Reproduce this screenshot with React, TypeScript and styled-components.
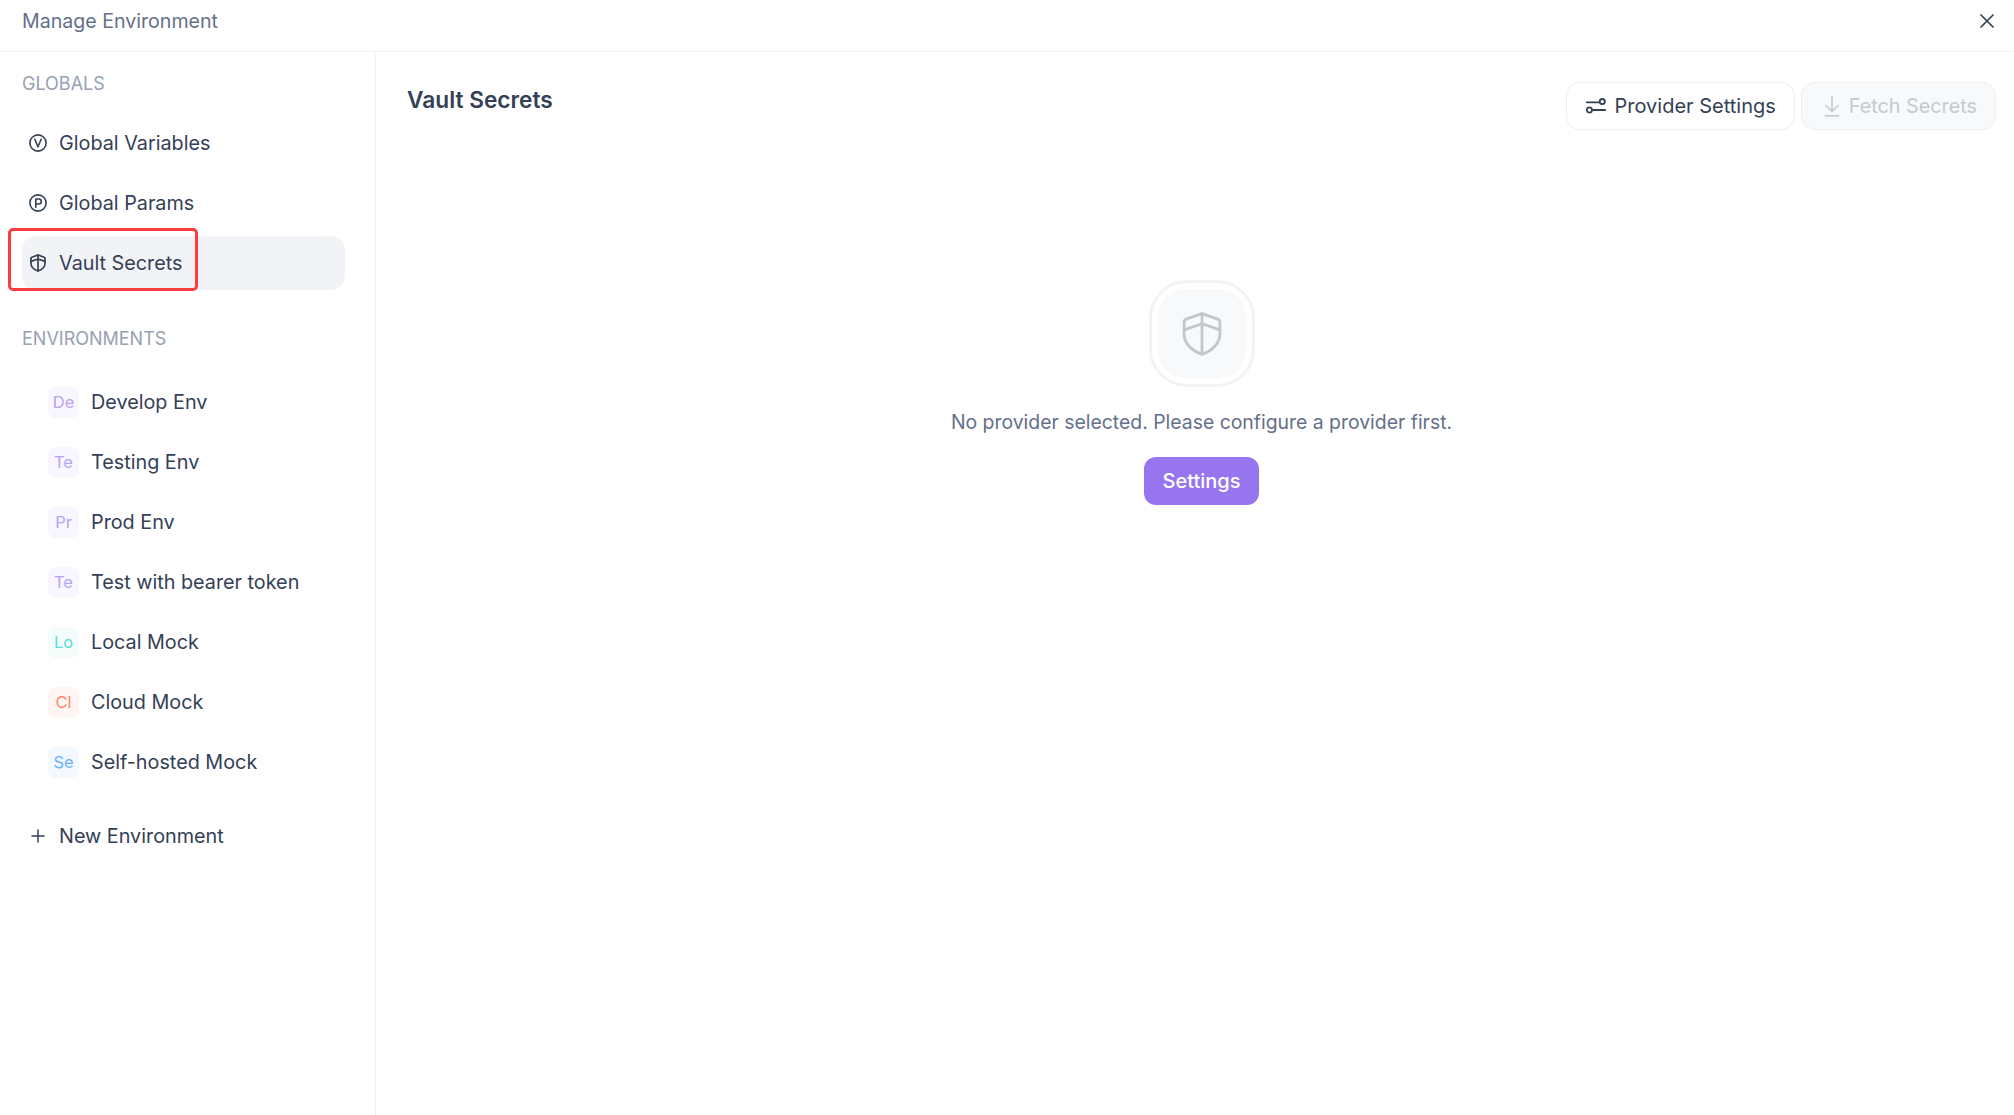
import * as React from 'react'
import styled, { createGlobalStyle } from 'styled-components'

const GlobalStyle = createGlobalStyle`
  html, body {
    margin: 0;
    padding: 0;
    background: #fff;
    font-family: Inter, "Liberation Sans", sans-serif;
  }
  * {
    box-sizing: border-box;
  }
`

const Page = styled.div`
  width: 2014px;
  height: 1115px;
  display: flex;
  flex-direction: column;
  overflow: hidden;
  background: #fff;
`

const Header = styled.header`
  height: 52px;
  flex: none;
  display: flex;
  align-items: center;
  justify-content: space-between;
  padding: 0 18px 10px 22px;
  border-bottom: 1px solid #f2f3f6;
`

const HeaderTitle = styled.div`
  font-size: 19.6px;
  line-height: 24px;
  color: #64708a;
`

const CloseButton = styled.button`
  display: flex;
  padding: 0;
  border: 0;
  background: none;
  color: #344056;
`

const Body = styled.div`
  flex: 1;
  display: flex;
  min-height: 0;
`

const Sidebar = styled.aside`
  width: 376px;
  flex: none;
  padding: 20px 30px 0 22px;
  border-right: 1px solid #f2f3f6;
`

const SectionLabel = styled.div<{ $top?: number; $bottom: number }>`
  font-size: 18px;
  line-height: 24px;
  color: #98a1b1;
  margin-top: ${(p) => p.$top || 0}px;
  margin-bottom: ${(p) => p.$bottom}px;
`

const NavList = styled.div`
  display: flex;
  flex-direction: column;
  gap: 6px;
`

const NavRow = styled.div<{ $active?: boolean; $indent?: boolean; $top?: number }>`
  height: 54px;
  display: flex;
  align-items: center;
  gap: 12px;
  padding-left: ${(p) => (p.$indent ? 26 : 7)}px;
  margin-top: ${(p) => p.$top || 0}px;
  border-radius: 14px;
  font-size: 19.8px;
  color: #344056;
  background: ${(p) => (p.$active ? '#f2f3f7' : 'transparent')};
`

const Badge = styled.span<{ $fg: string; $bg: string }>`
  width: 31px;
  height: 31px;
  flex: none;
  display: flex;
  align-items: center;
  justify-content: center;
  border-radius: 8px;
  font-size: 16.5px;
  color: ${(p) => p.$fg};
  background: ${(p) => p.$bg};
`

const Callout = styled.div`
  position: absolute;
  left: 8px;
  top: 228px;
  width: 190px;
  height: 63px;
  border: 3.5px solid #fb3c40;
  border-radius: 5px;
`

const Main = styled.main`
  flex: 1;
  min-width: 0;
  padding: 30px 18px 0 31px;
`

const MainHead = styled.div`
  display: flex;
  align-items: flex-start;
  justify-content: space-between;
`

const MainTitle = styled.h1`
  margin: 0;
  font-size: 22.7px;
  line-height: 36px;
  font-weight: 600;
  color: #344056;
`

const Actions = styled.div`
  display: flex;
  gap: 6px;
`

const ActionButton = styled.button<{ $disabled?: boolean }>`
  height: 48px;
  display: flex;
  align-items: center;
  gap: ${(p) => (p.$disabled ? 8 : 9)}px;
  padding: 0 18px 0 19px;
  border-radius: 14px;
  border: 1px solid ${(p) => (p.$disabled ? '#eceef2' : '#eceef1')};
  background: ${(p) => (p.$disabled ? '#f8f9fb' : '#fff')};
  color: ${(p) => (p.$disabled ? '#c5c9d0' : '#344056')};
  font-family: inherit;
  font-size: ${(p) => (p.$disabled ? 19.8 : 20)}px;
`

const Empty = styled.div`
  display: flex;
  flex-direction: column;
  align-items: center;
  margin-top: 150px;
`

const IconFrame = styled.div`
  width: 106px;
  height: 107px;
  padding: 6px;
  border: 3px solid #f2f3f7;
  border-radius: 38px;
`

const IconInner = styled.div`
  width: 100%;
  height: 100%;
  display: flex;
  align-items: center;
  justify-content: center;
  border-radius: 28px;
  background: #f8f9fb;
  color: #c3c6cc;
`

const EmptyText = styled.p`
  margin: 22px 0 0;
  font-size: 19.4px;
  line-height: 26px;
  color: #64708a;
`

const PrimaryButton = styled.button`
  width: 115px;
  height: 48px;
  margin-top: 22px;
  border: 0;
  border-radius: 12px;
  background: #9775ee;
  color: #fff;
  font-family: inherit;
  font-size: 20px;
  font-weight: 500;
`

const LetterCircleIcon = ({ letter }: { letter: 'v' | 'p' }) => (
  <svg width="18" height="18" viewBox="0 0 18 18" fill="none" stroke="currentColor" strokeWidth="1.6" strokeLinecap="round" strokeLinejoin="round">
    <circle cx="9" cy="9" r="8.1" />
    {letter === 'v' ? (
      <path d="M5.8 5.2 9 12.8l3.200-7.600" />
    ) : (
      <path d="M6.800 13.200V5h3a2.500 2.500 0 0 1 0 5H6.800" />
    )}
  </svg>
)

const ShieldIcon = ({ size, strokeWidth }: { size: number; strokeWidth: number }) => (
  <svg width={size} height={size} viewBox="0 0 18 18" fill="none" stroke="currentColor" strokeWidth={strokeWidth} strokeLinecap="round" strokeLinejoin="round">
    <path d="M9 1 15.2 3.200c.5.2.8.6.8 1.200v4.800c0 3.600-3.400 6.600-7 7.800-3.600-1.200-7-4.200-7-7.800V4.400c0-.6.3-1 .8-1.200L9 1Z" />
    <path d="M9 1v16M2 7.400 9 5l7 2.400" />
  </svg>
)

const PlusIcon = () => (
  <svg width="18" height="18" viewBox="0 0 18 18" fill="none" stroke="currentColor" strokeWidth="1.5" strokeLinecap="round">
    <path d="M9 3v12M3 9h12" />
  </svg>
)

const CloseIcon = () => (
  <svg width="18" height="18" viewBox="0 0 18 18" fill="none" stroke="currentColor" strokeWidth="1.7" strokeLinecap="round">
    <path d="M3 3l12 12M15 3 3 15" />
  </svg>
)

const SliderIcon = () => (
  <svg width="20" height="20" viewBox="0 0 20 20" fill="none" stroke="currentColor" strokeWidth="1.8" strokeLinecap="round">
    <circle cx="16.300" cy="5.600" r="2.600" />
    <circle cx="3.400" cy="14" r="2.600" />
    <path d="M.8 6.300h12.200M7.400 14h11.800" />
  </svg>
)

const DownloadIcon = () => (
  <svg width="20" height="21" viewBox="0 0 20 21" fill="none" stroke="currentColor" strokeWidth="1.7" strokeLinecap="round" strokeLinejoin="round">
    <path d="M11 .8v14.700M5 9.500l6 6 6-6M4.500 19.800h13" />
  </svg>
)

const purple = { fg: '#b9a2f6', bg: '#f8f6fe' }

const environments = [
  { short: 'De', name: 'Develop Env', ...purple },
  { short: 'Te', name: 'Testing Env', ...purple },
  { short: 'Pr', name: 'Prod Env', ...purple },
  { short: 'Te', name: 'Test with bearer token', ...purple },
  { short: 'Lo', name: 'Local Mock', fg: '#5cdcd5', bg: '#f3fcfb' },
  { short: 'Cl', name: 'Cloud Mock', fg: '#fb8a6c', bg: '#fff5f2' },
  { short: 'Se', name: 'Self-hosted Mock', fg: '#68b3fb', bg: '#f4f9ff' },
]

const App = () => {
  return (
    <Page>
      <GlobalStyle />
      <Header>
        <HeaderTitle>Manage Environment</HeaderTitle>
        <CloseButton>
          <CloseIcon />
        </CloseButton>
      </Header>
      <Body>
        <Sidebar>
          <SectionLabel $bottom={20}>GLOBALS</SectionLabel>
          <NavList>
            <NavRow>
              <LetterCircleIcon letter="v" />
              Global Variables
            </NavRow>
            <NavRow>
              <LetterCircleIcon letter="p" />
              Global Params
            </NavRow>
            <NavRow $active>
              <ShieldIcon size={18} strokeWidth={1.7} />
              Vault Secrets
            </NavRow>
          </NavList>
          <SectionLabel $top={37} $bottom={24}>
            ENVIRONMENTS
          </SectionLabel>
          <NavList>
            {environments.map((env) => (
              <NavRow key={env.name} $indent>
                <Badge $fg={env.fg} $bg={env.bg}>
                  {env.short}
                </Badge>
                {env.name}
              </NavRow>
            ))}
            <NavRow $top={14}>
              <PlusIcon />
              New Environment
            </NavRow>
          </NavList>
        </Sidebar>
        <Main>
          <MainHead>
            <MainTitle>Vault Secrets</MainTitle>
            <Actions>
              <ActionButton>
                <SliderIcon />
                Provider Settings
              </ActionButton>
              <ActionButton $disabled>
                <DownloadIcon />
                Fetch Secrets
              </ActionButton>
            </Actions>
          </MainHead>
          <Empty>
            <IconFrame>
              <IconInner>
                <ShieldIcon size={46} strokeWidth={1.1} />
              </IconInner>
            </IconFrame>
            <EmptyText>No provider selected. Please configure a provider first.</EmptyText>
            <PrimaryButton>Settings</PrimaryButton>
          </Empty>
        </Main>
      </Body>
      <Callout />
    </Page>
  )
}

export default App
